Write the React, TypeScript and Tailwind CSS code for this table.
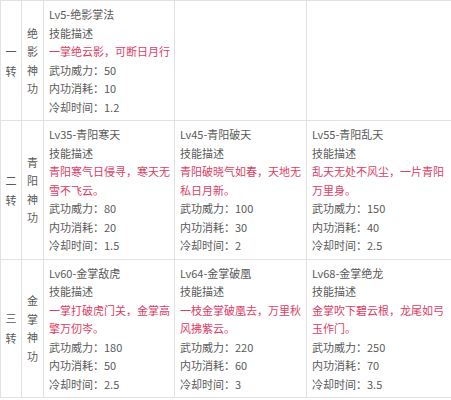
import React from "react";

type Skill = {
  title: string;
  desc: string;
  power: string;
  cost: string;
  cd: string;
};

const rows: { stage: string[]; name: string[]; skills: (Skill | null)[] }[] = [
  {
    stage: ["一", "转"],
    name: ["绝", "影", "神", "功"],
    skills: [
      { title: "Lv5-绝影掌法", desc: "一掌绝云影，可断日月行", power: "50", cost: "10", cd: "1.2" },
      null,
      null,
    ],
  },
  {
    stage: ["二", "转"],
    name: ["青", "阳", "神", "功"],
    skills: [
      { title: "Lv35-青阳寒天", desc: "青阳寒气日侵寻，寒天无雪不飞云。", power: "80", cost: "20", cd: "1.5" },
      { title: "Lv45-青阳破天", desc: "青阳破晓气如春，天地无私日月新。", power: "100", cost: "30", cd: "2" },
      { title: "Lv55-青阳乱天", desc: "乱天无处不风尘，一片青阳万里身。", power: "150", cost: "40", cd: "2.5" },
    ],
  },
  {
    stage: ["三", "转"],
    name: ["金", "掌", "神", "功"],
    skills: [
      { title: "Lv60-金掌敌虎", desc: "一掌打破虎门关，金掌高擎万仞岑。", power: "180", cost: "50", cd: "2.5" },
      { title: "Lv64-金掌破凰", desc: "一枝金掌破凰去，万里秋风拂紫云。", power: "220", cost: "60", cd: "3" },
      { title: "Lv68-金掌绝龙", desc: "金掌吹下碧云根，龙尾如弓玉作门。", power: "250", cost: "70", cd: "3.5" },
    ],
  },
];

const SkillCell = ({ s }: { s: Skill | null }) => (
  <td className="border border-[#e2e2e2] align-top pl-[5px] pr-0 py-[4px]">
    {s && (
      <>
        <div>{s.title}</div>
        <div>技能描述</div>
        <div className="text-[#dc4065]">{s.desc}</div>
        <div>武功威力：{s.power}</div>
        <div>内功消耗：{s.cost}</div>
        <div>冷却时间：{s.cd}</div>
      </>
    )}
  </td>
);

export default function App() {
  return (
    <div className="w-[451px] h-[400px] bg-white">
      <table
        className="table-fixed border-collapse w-[451px] text-[11px] leading-[18.5px] text-[#5a5a5a]"
        style={{ fontFamily: '"Noto Sans CJK SC", "Noto Sans", sans-serif' }}
      >
        <colgroup>
          <col className="w-[21px]" />
          <col className="w-[22px]" />
          <col className="w-[131px]" />
          <col className="w-[132px]" />
          <col className="w-[145px]" />
        </colgroup>
        <tbody>
          {rows.map((r) => (
            <tr key={r.stage[0]}>
              <td className="border border-[#e2e2e2] align-middle text-center p-0">
                {r.stage.map((c) => (
                  <div key={c} className="leading-[20px]">{c}</div>
                ))}
              </td>
              <td className="border border-[#e2e2e2] align-middle text-center p-0">
                {r.name.map((c) => (
                  <div key={c}>{c}</div>
                ))}
              </td>
              {r.skills.map((s, i) => (
                <SkillCell key={i} s={s} />
              ))}
            </tr>
          ))}
        </tbody>
      </table>
    </div>
  );
}
